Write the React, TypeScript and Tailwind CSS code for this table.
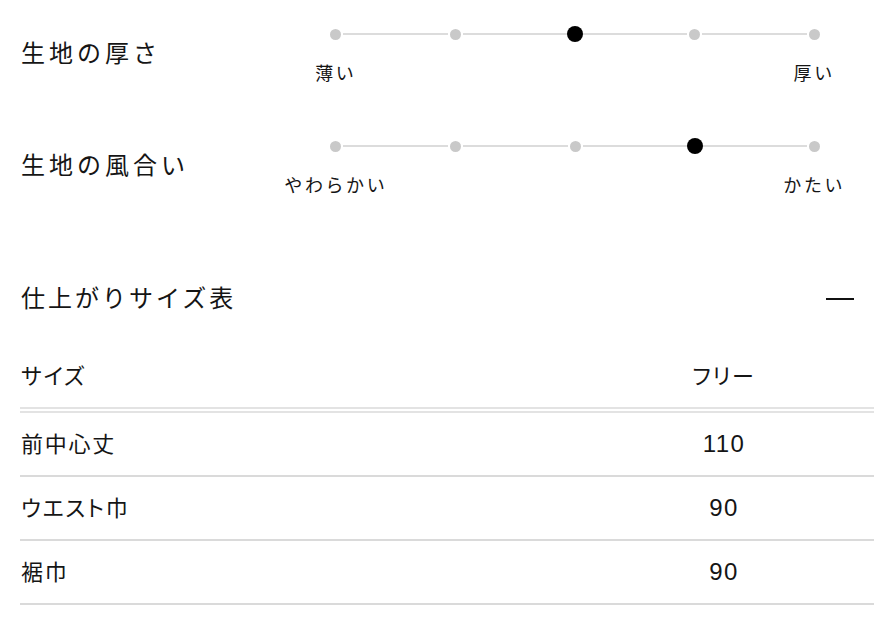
import React from "react";

const jp = "font-['Noto_Sans_CJK_JP','Noto_Sans',sans-serif]";
const tbl = "font-['Liberation_Sans','Noto_Sans_CJK_JP',sans-serif] [font-feature-settings:'palt']";

function Scale({ title, left, right, active }: { title: string; left: string; right: string; active: number }) {
  const idx = [0, 1, 2, 3, 4];
  return (
    <div className="grid grid-cols-[256px_1fr]">
      <div className={`${jp} mt-2 pl-[1px] text-[24px] leading-[36px] tracking-[4px] text-[#151515]`}>{title}</div>
      <div>
        <div className="grid grid-cols-5 h-4">
          {idx.map((i) => (
            <div key={i} className="flex items-center">
              <div className={`flex-1 h-[2px] ${i === 0 ? "bg-transparent" : "bg-[#dcdcdc]"}`} />
              {i === active ? (
                <div className="w-4 h-4 rounded-full bg-black" />
              ) : (
                <div className="mx-[2px] w-[11px] h-[11px] rounded-full bg-[#c9c9c9]" />
              )}
              <div className={`flex-1 h-[2px] ${i === 4 ? "bg-transparent" : "bg-[#dcdcdc]"}`} />
            </div>
          ))}
        </div>
        <div className={`${jp} grid grid-cols-5 mt-[17px] text-[18px] leading-[26px] tracking-[2.6px] text-[#151515]`}>
          <div className="text-center">{left}</div>
          <div />
          <div />
          <div />
          <div className="text-center">{right}</div>
        </div>
      </div>
    </div>
  );
}

export default function App() {
  const rows = [
    ["前中心丈", "110"],
    ["ウエスト巾", "90"],
    ["裾巾", "90"],
  ];
  return (
    <div className="w-[890px] h-[624px] bg-white pl-5 pr-4 pt-[26px] overflow-hidden">
      <Scale title="生地の厚さ" left="薄い" right="厚い" active={2} />
      <div className="mt-[53px]">
        <Scale title="生地の風合い" left="やわらかい" right="かたい" active={3} />
      </div>
      <div className="mt-[82px] flex items-center justify-between h-9">
        <div className={`${jp} pl-[1px] text-[24px] leading-[36px] tracking-[3px] text-[#151515]`}>仕上がりサイズ表</div>
        <div className="mr-5 mt-[3px] w-[28px] h-[2px] bg-[#111]" />
      </div>
      <div className={`${tbl} mt-[30px] text-[22px] tracking-[0.08em] text-[#151515]`}>
        <div className="grid grid-cols-[554px_1fr] h-[68px] items-center border-b-[6px] border-double border-[#e3e3e3]">
          <div className="pl-[1px]">サイズ</div>
          <div className="text-center">フリー</div>
        </div>
        {rows.map(([k, v]) => (
          <div key={k} className="grid grid-cols-[554px_1fr] h-[64px] items-center border-b-2 border-[#dadada]">
            <div className="pl-[1px]">{k}</div>
            <div className="text-center text-[24px] tracking-[0.06em]">{v}</div>
          </div>
        ))}
      </div>
    </div>
  );
}
